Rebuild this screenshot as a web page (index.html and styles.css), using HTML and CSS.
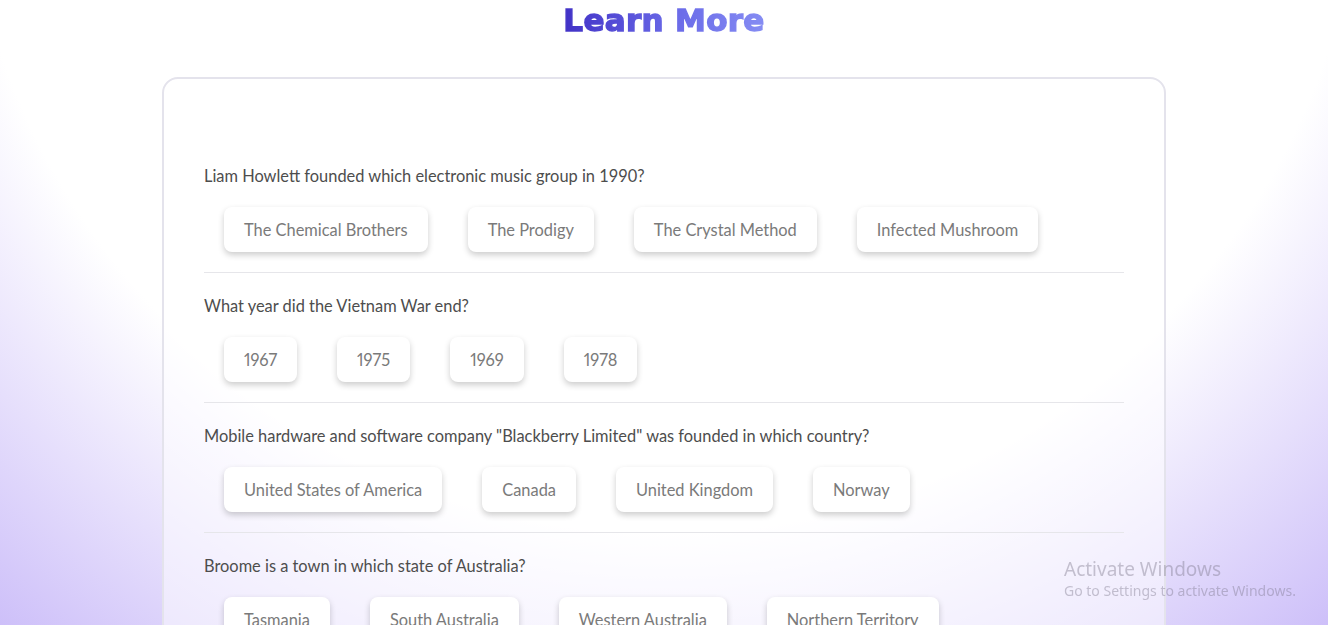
FILE: index.html
```html
<!DOCTYPE html>
<html lang="en">
<head>
<meta charset="utf-8">
<title>Learn More</title>
<link rel="stylesheet" href="styles.css">
</head>
<body>
<header class="hero">
  <h1 class="title">Learn More</h1>
</header>
<main class="card">
  <section class="quiz-item">
    <p class="question">Liam Howlett founded which electronic music group in 1990?</p>
    <div class="answers">
      <button class="answer">The Chemical Brothers</button>
      <button class="answer">The Prodigy</button>
      <button class="answer">The Crystal Method</button>
      <button class="answer">Infected Mushroom</button>
    </div>
  </section>
  <section class="quiz-item">
    <p class="question">What year did the Vietnam War end?</p>
    <div class="answers">
      <button class="answer">1967</button>
      <button class="answer">1975</button>
      <button class="answer">1969</button>
      <button class="answer">1978</button>
    </div>
  </section>
  <section class="quiz-item">
    <p class="question">Mobile hardware and software company &quot;Blackberry Limited&quot; was founded in which country?</p>
    <div class="answers">
      <button class="answer">United States of America</button>
      <button class="answer">Canada</button>
      <button class="answer">United Kingdom</button>
      <button class="answer">Norway</button>
    </div>
  </section>
  <section class="quiz-item">
    <p class="question">Broome is a town in which state of Australia?</p>
    <div class="answers">
      <button class="answer">Tasmania</button>
      <button class="answer">South Australia</button>
      <button class="answer">Western Australia</button>
      <button class="answer">Northern Territory</button>
    </div>
  </section>
</main>
<aside class="watermark">
  <div class="wm-title">Activate Windows</div>
  <div class="wm-sub">Go to Settings to activate Windows.</div>
</aside>
</body>
</html>
```
FILE: styles.css
```css
html, body {
  margin: 0;
  padding: 0;
}
body {
  min-height: 100vh;
  background: radial-gradient(circle at 50% -172px, #ffffff 700px, #cdbff9 1040px) fixed;
  font-family: Lato, "Noto Sans", sans-serif;
  overflow: hidden;
}
.hero {
  display: flex;
  justify-content: center;
  height: 77px;
}
.title {
  margin: 0;
  font-family: "DejaVu Sans", sans-serif;
  font-weight: 700;
  font-size: 31px;
  line-height: 40px;
  letter-spacing: 0.3px;
  background: linear-gradient(90deg, #4131c6 0%, #6a6ae8 55%, #858cf3 100%);
  -webkit-background-clip: text;
  background-clip: text;
  color: transparent;
  -webkit-text-stroke: 1.4px transparent;
}
.card {
  width: 920px;
  margin: 0 auto;
  padding: 64px 40px 40px;
  border: 2px solid #e4e3ec;
  border-radius: 16px;
  background: rgba(255, 255, 255, 0.5);
}
.quiz-item {
  padding: 22px 0 20px;
  border-bottom: 1px solid #e6e6ea;
}
.question {
  margin: 0;
  font-size: 16.4px;
  line-height: 22px;
  color: #4d4d4d;
}
.answers {
  display: flex;
  gap: 40px;
  margin-top: 20px;
  padding-left: 20px;
}
.answer {
  font-family: Lato, "Noto Sans", sans-serif;
  font-size: 16.4px;
  line-height: 21px;
  padding: 12px 20px;
  color: #7a7a7a;
  background: #ffffff;
  border: none;
  border-radius: 8px;
  box-shadow: 0 3px 6px rgba(0, 0, 0, 0.2);
  font-variant-numeric: proportional-nums;
}
.watermark {
  position: fixed;
  left: 1064px;
  top: 557px;
  color: rgba(120, 115, 135, 0.4);
  font-family: "Noto Sans", "Open Sans", sans-serif;
}
.wm-title {
  font-size: 19px;
  line-height: 24px;
}
.wm-sub {
  font-size: 14px;
  line-height: 20px;
}
```
